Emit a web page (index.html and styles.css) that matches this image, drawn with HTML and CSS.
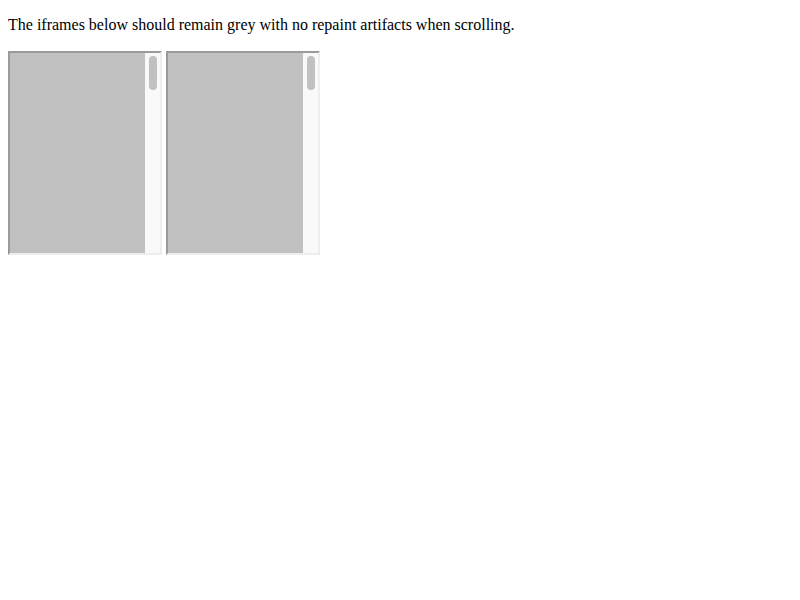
FILE: index.html
```html
<!DOCTYPE html>
<html>
<head>
<meta charset="utf-8">
<link rel="stylesheet" href="styles.css">
</head>
<body>
<p class="intro">The iframes below should remain grey with no repaint artifacts when scrolling.</p>
<div class="frame"><div class="content"></div><div class="scrollbar"><div class="thumb"></div></div></div>
<div class="frame"><div class="content"></div><div class="scrollbar"><div class="thumb"></div></div></div>
</body>
</html>
```
FILE: styles.css
```css
html {
  margin: 0;
  padding: 0;
}
body {
  margin: 0;
  padding: 8px;
  font-family: "Liberation Serif", "Times New Roman", serif;
  font-size: 16px;
  background: #fff;
  color: #000;
}
.intro {
  margin: 8px 0 17px;
}
.frame {
  display: inline-flex;
  vertical-align: baseline;
  width: 150px;
  height: 200px;
  border-style: solid;
  border-width: 2px;
  border-color: #9a9a9a #eeeeee #eeeeee #9a9a9a;
}
.content {
  flex: 1;
  background: #c0c0c0;
}
.scrollbar {
  width: 15px;
  background: #f9f9f9;
  padding-top: 3px;
  box-sizing: border-box;
}
.thumb {
  width: 8px;
  height: 34px;
  margin-left: 4px;
  border-radius: 4px;
  background: #c1c1c1;
}
```
